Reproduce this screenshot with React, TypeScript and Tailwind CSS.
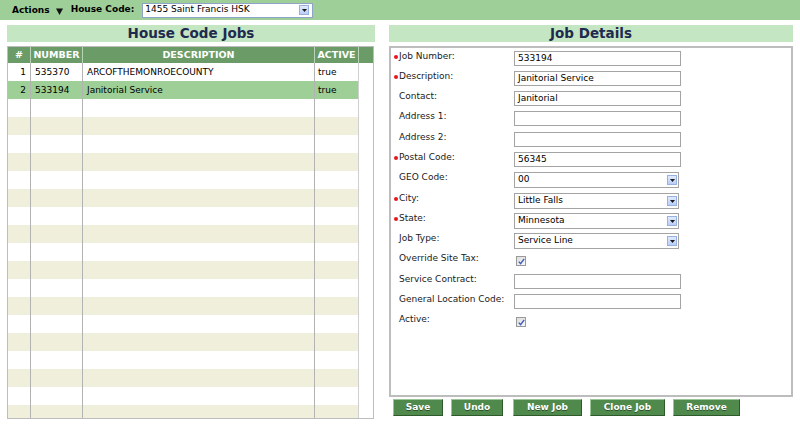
import React from 'react';

type Field = {
  label: string;
  required?: boolean;
  kind: 'input' | 'select' | 'check';
  value?: string;
  h: string;
};

const fields: Field[] = [
  { label: 'Job Number:', required: true, kind: 'input', value: '533194', h: 'h-[20px]' },
  { label: 'Description:', required: true, kind: 'input', value: 'Janitorial Service', h: 'h-[20px]' },
  { label: 'Contact:', kind: 'input', value: 'Janitorial', h: 'h-[20px]' },
  { label: 'Address 1:', kind: 'input', value: '', h: 'h-[21px]' },
  { label: 'Address 2:', kind: 'input', value: '', h: 'h-[20px]' },
  { label: 'Postal Code:', required: true, kind: 'input', value: '56345', h: 'h-[20px]' },
  { label: 'GEO Code:', kind: 'select', value: '00', h: 'h-[21px]' },
  { label: 'City:', required: true, kind: 'select', value: 'Little Falls', h: 'h-[20px]' },
  { label: 'State:', required: true, kind: 'select', value: 'Minnesota', h: 'h-[20px]' },
  { label: 'Job Type:', kind: 'select', value: 'Service Line', h: 'h-[20px]' },
  { label: 'Override Site Tax:', kind: 'check', h: 'h-[21px]' },
  { label: 'Service Contract:', kind: 'input', value: '', h: 'h-[20px]' },
  { label: 'General Location Code:', kind: 'input', value: '', h: 'h-[20px]' },
  { label: 'Active:', kind: 'check', h: 'h-[20px]' },
];

const jobs = [
  { n: '1', number: '535370', desc: 'ARCOFTHEMONROECOUNTY', active: 'true' },
  { n: '2', number: '533194', desc: 'Janitorial Service', active: 'true' },
];

const DropArrow = () => (
  <div className="w-[10px] h-[10px] border border-[#98b1e3] bg-gradient-to-b from-[#e2ebfd] to-[#b9cdf6] flex items-center justify-center">
    <svg width="5" height="3" viewBox="0 0 5 3">
      <path d="M0 0h5L2.5 3z" fill="#1a1a1a" />
    </svg>
  </div>
);

const CheckBox = () => (
  <div className="mt-[3px] ml-[2px] w-[10px] h-[10px] border border-[#9a9a9a] bg-gradient-to-br from-[#dcdcdc] to-[#f8f8f8] flex items-center justify-center">
    <svg width="7" height="7" viewBox="0 0 7 7">
      <path d="M0.8 3.6L2.6 5.6L6.2 0.8" stroke="#3c5db8" strokeWidth="1.4" fill="none" />
    </svg>
  </div>
);

const Button = ({ label, w }: { label: string; w: string }) => (
  <button
    className={`${w} h-[17px] bg-[#4f8a4c] border border-t-[#9cc499] border-l-[#9cc499] border-b-[#2e5a2c] border-r-[#2e5a2c] text-white font-bold text-[9px] leading-[15px] [text-shadow:0_1px_0_#2c4f2a]`}
  >
    {label}
  </button>
);

export default function App() {
  const rows = Array.from({ length: 20 }, (_, i) => i);

  return (
    <div className="w-[800px] h-[426px] bg-white overflow-hidden text-[9px] text-black font-['DejaVu_Sans',sans-serif]">
      {/* top bar */}
      <div className="h-[20px] bg-[#9fcf99] flex items-center pl-[12px]">
        <span className="font-bold mt-[2px]">Actions</span>
        <svg className="ml-[6px] mt-[2px]" width="7" height="7" viewBox="0 0 7 7">
          <path d="M0 0.5h7L3.5 7z" fill="#111" />
        </svg>
        <span className="ml-[8px] font-bold">House Code:</span>
        <div className="ml-[8px] w-[171px] h-[15px] bg-white border border-[#8ea3c6] flex items-center justify-between pl-[2px] pr-[3px]">
          <span>1455 Saint Francis HSK</span>
          <DropArrow />
        </div>
      </div>

      <div className="flex pt-[5px]">
        {/* left panel */}
        <div className="ml-[7px] w-[368px]">
          <div className="h-[17px] bg-[#c5e6c2] text-center font-bold text-[13.5px] leading-[17px] text-[#1e2a4f]">
            House Code Jobs
          </div>
          <div className="mt-[4px] w-[367px] h-[373px] border border-[#bdbdbd]">
            <div className="grid grid-cols-[23px_52px_232px_44px_14px] h-[16px] bg-[#6b9b67] text-white font-bold text-[9.5px] leading-[16px]">
              <div className="text-center border-r border-[#b9d3b6]">#</div>
              <div className="text-center border-r border-[#b9d3b6]">NUMBER</div>
              <div className="text-center border-r border-[#b9d3b6]">DESCRIPTION</div>
              <div className="text-center border-r border-[#b9d3b6]">ACTIVE</div>
              <div />
            </div>
            <div className="h-[355px] overflow-hidden">
              {rows.map((i) => {
                const job = jobs[i];
                const bg = i === 1 ? 'bg-[#9dcf97]' : i % 2 === 1 ? 'bg-[#efefdc]' : 'bg-white';
                return (
                  <div key={i} className="grid grid-cols-[23px_52px_232px_44px_14px] h-[18px] leading-[18px]">
                    <div className={`${bg} border-r border-[#b3b3b3] text-right pr-[4px]`}>{job?.n}</div>
                    <div className={`${bg} border-r border-[#b3b3b3] pl-[4px]`}>{job?.number}</div>
                    <div className={`${bg} border-r border-[#b3b3b3] pl-[4px]`}>{job?.desc}</div>
                    <div className={`${bg} border-r border-[#d0d0d0] pl-[3px]`}>{job?.active}</div>
                    <div className="bg-white" />
                  </div>
                );
              })}
            </div>
          </div>
        </div>

        {/* right panel */}
        <div className="ml-[14px] w-[404px]">
          <div className="h-[17px] bg-[#c5e6c2] text-center font-bold text-[13.5px] leading-[17px] text-[#1e2a4f]">
            Job Details
          </div>
          <div className="mt-[4px] h-[351px] border-2 border-[#bdbdbd] pt-[3px] pl-[3px]">
            {fields.map((f) => (
              <div key={f.label} className={`${f.h} flex items-start`}>
                <div className="w-[120px] flex items-start leading-[11px] text-[#1a1a1a]">
                  <span className="w-[5px] h-[11px] flex items-center">
                    {f.required && <span className="w-[4px] h-[4px] rounded-full bg-[#e8161b]" />}
                  </span>
                  <span>{f.label}</span>
                </div>
                {f.kind === 'input' && (
                  <div className="w-[167px] h-[15px] border border-[#a4a4a4] bg-white pl-[3px] leading-[13px]">
                    {f.value}
                  </div>
                )}
                {f.kind === 'select' && (
                  <div className="w-[165px] h-[16px] border border-[#a4a4a4] bg-white pl-[3px] pr-[1px] flex items-center justify-between">
                    <span>{f.value}</span>
                    <DropArrow />
                  </div>
                )}
                {f.kind === 'check' && <CheckBox />}
              </div>
            ))}
          </div>
          <div className="flex mt-[2px] ml-[4px]">
            <Button label="Save" w="w-[50px]" />
            <div className="ml-[8px]">
              <Button label="Undo" w="w-[52px]" />
            </div>
            <div className="ml-[10px]">
              <Button label="New Job" w="w-[69px]" />
            </div>
            <div className="ml-[8px]">
              <Button label="Clone Job" w="w-[75px]" />
            </div>
            <div className="ml-[8px]">
              <Button label="Remove" w="w-[67px]" />
            </div>
          </div>
        </div>
      </div>
    </div>
  );
}
